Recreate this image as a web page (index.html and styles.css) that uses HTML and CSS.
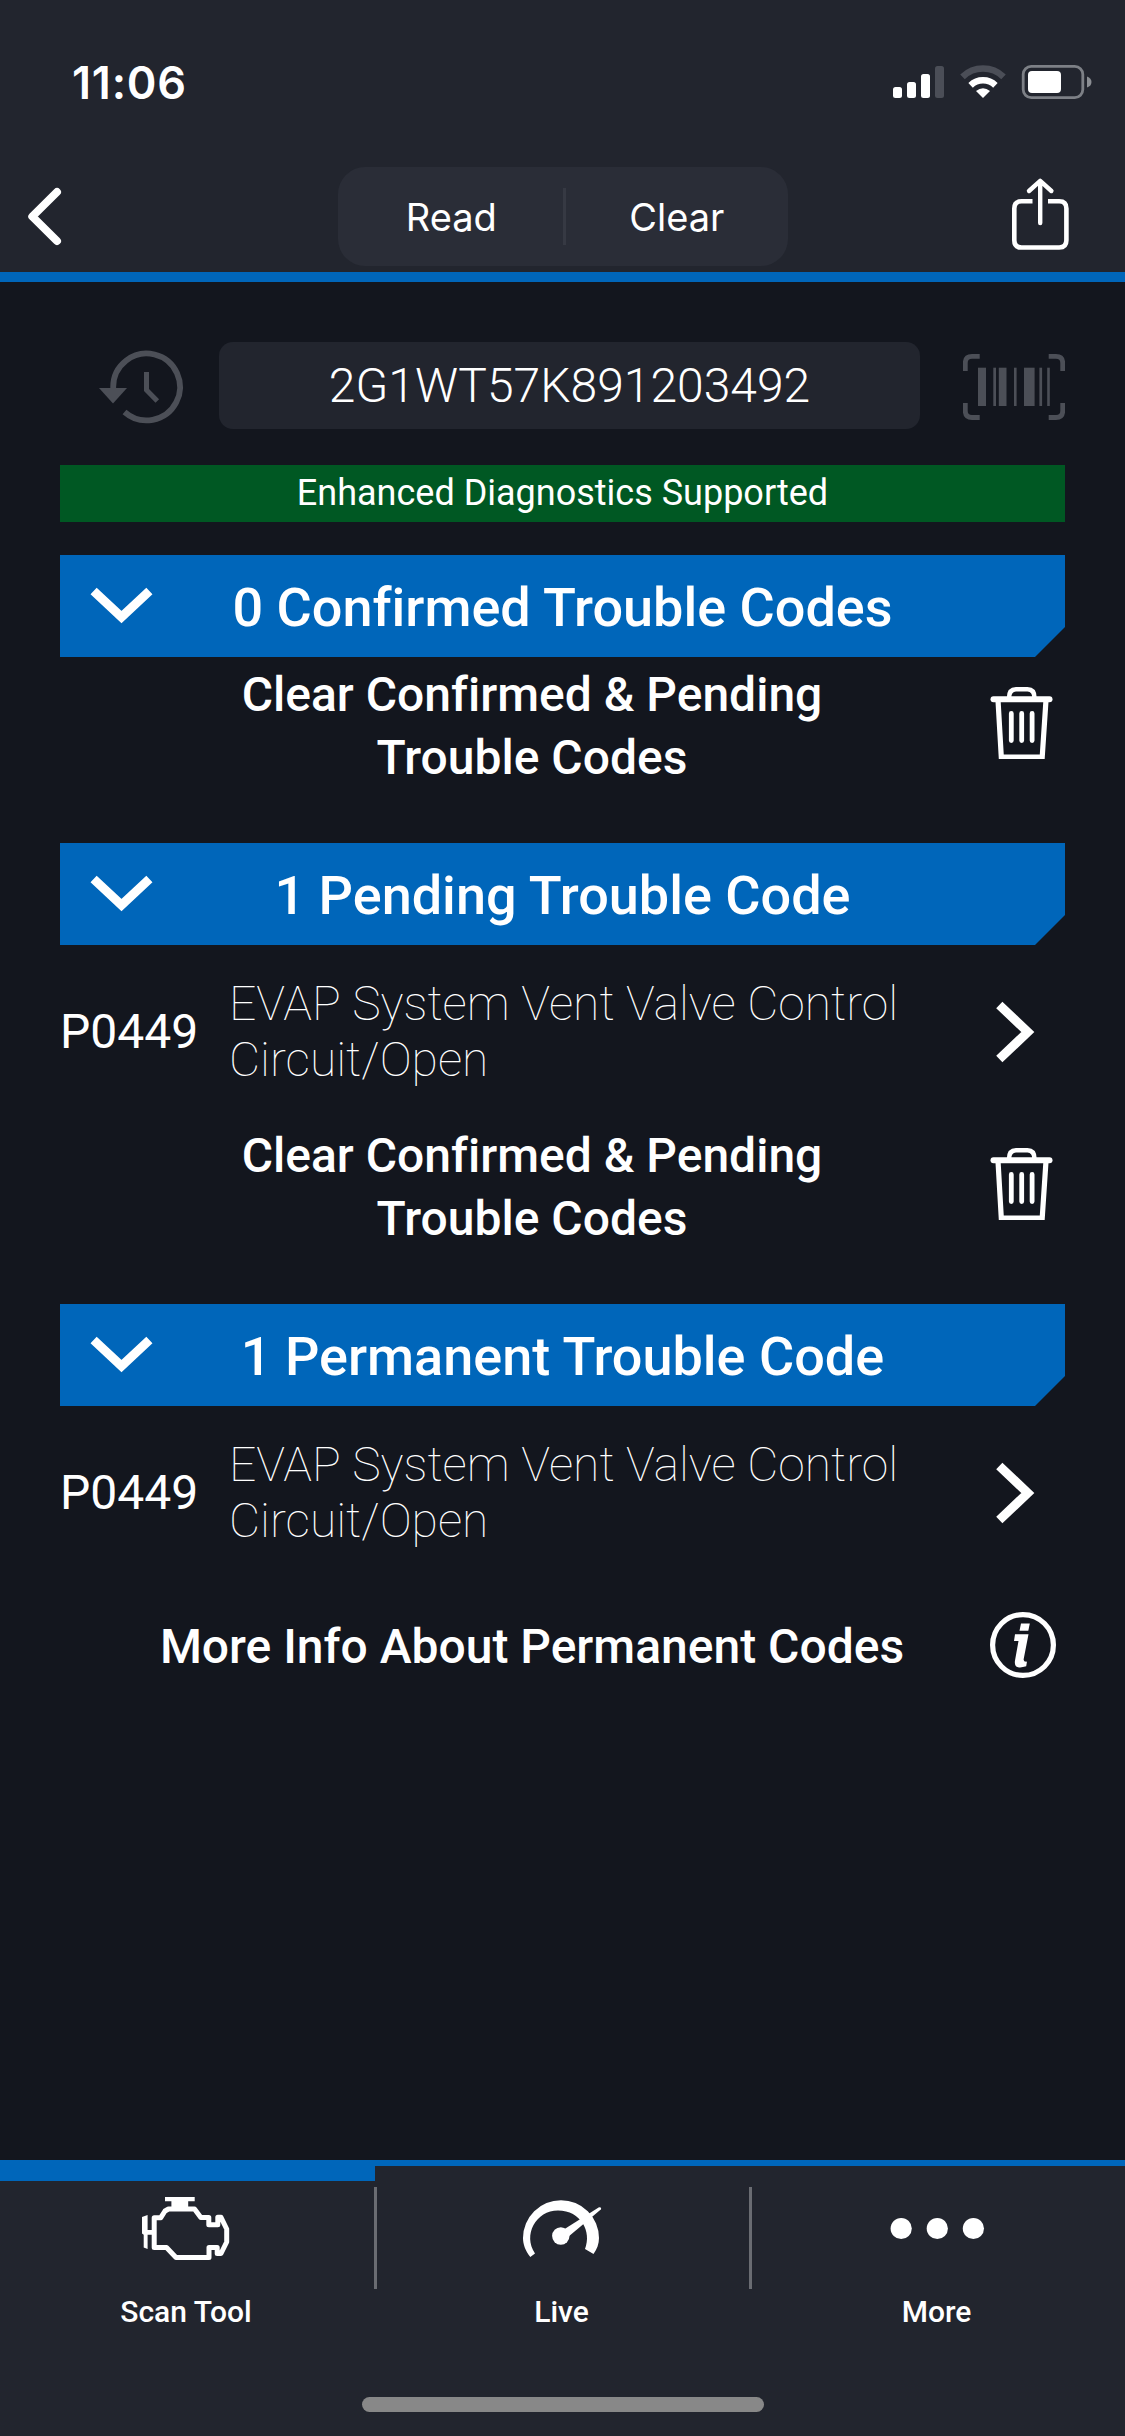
FILE: index.html
```
<!DOCTYPE html>
<html lang="en">
<head>
    <meta charset="UTF-8">
    <title>Trouble Codes</title>
    <link rel="stylesheet" href="styles.css">
</head>
<body>
<!-- shared icons -->
<svg class="defs">
    <symbol id="down" viewBox="0 0 64 38">
        <path d="M3.6 4L31.5 30L59.4 4" fill="none" stroke="#fff" stroke-width="9"/>
    </symbol>
    <symbol id="next" viewBox="0 0 40 62">
        <path d="M3.3 4L31.8 31L3.3 58" fill="none" stroke="#fff" stroke-width="9"/>
    </symbol>
    <symbol id="trash" viewBox="0 0 66 74">
        <g fill="none" stroke="#fff">
            <path d="M19 13C19 6 22 4.2 26 4.2H37.500C41.500 4.200 44.500 6 44.500 13" stroke-width="4.500"/>
            <path d="M3.500 14.300H59.500" stroke-width="6" stroke-linecap="round"/>
            <path d="M8 15L11.300 72.200H52.200L56 15" stroke-width="5.200"/>
            <path d="M21.300 28.500V55.500M31.700 28.500V55.500M42.100 28.500V55.500" stroke-width="4.800" stroke-linecap="round"/>
        </g>
    </symbol>
</svg>

<div class="app">
    <div class="header">
        <div class="status">
            <span class="time">11:06</span>
            <svg class="signal" width="202" height="36" viewBox="891 64 202 36">
                <g fill="#fff">
                    <rect x="893" y="87" width="9" height="11" rx="2.500"/>
                    <rect x="907" y="82" width="9" height="16" rx="2.500"/>
                    <rect x="921" y="74" width="9" height="24" rx="2.500"/>
                    <rect x="935" y="66" width="9" height="32" rx="2.500" fill="#4b4e57"/>
                </g>
                <path d="M962.500 76.800A29.500 29.500 0 0 1 1003.500 76.800" fill="none" stroke="#4b4e57" stroke-width="6.500"/>
                <path d="M970.600 85.300A18 18 0 0 1 995.400 85.300" fill="none" stroke="#fff" stroke-width="6.500"/>
                <path d="M983 98L976 91Q983 85.500 990 91Z" fill="#fff"/>
                <rect x="1023.200" y="66.300" width="59.600" height="31.300" rx="8" fill="none" stroke="#7d8086" stroke-width="2.800"/>
                <rect x="1028" y="71" width="33" height="22" rx="4" fill="#fff"/>
                <path d="M1087 76.500Q1091.500 78 1091.500 82T1087 87.500Z" fill="#8b8e93"/>
            </svg>
        </div>
        <div class="nav">
            <svg class="back" width="40" height="64" viewBox="25 184 40 64">
                <path d="M57 191L32.300 215.500L57 240" fill="none" stroke="#fff" stroke-width="8" stroke-linecap="round" stroke-linejoin="round"/>
            </svg>
            <div class="switch">
                <span class="read">Read</span>
                <span class="line"></span>
                <span class="clear">Clear</span>
            </div>
            <svg class="share" width="60" height="74" viewBox="1010 177 60 74">
                <g fill="none" stroke="#fff" stroke-width="4.600">
                    <path d="M1032.500 201.300H1021.500Q1014.300 201.300 1014.300 208.500V240.300Q1014.300 247.500 1021.500 247.500H1059.200Q1066.400 247.500 1066.400 240.300V208.500Q1066.400 201.300 1059.200 201.300H1048"/>
                    <path d="M1040.200 223V182M1029 191L1040.200 180.800L1051.400 191" stroke-width="4.400" stroke-linecap="round" stroke-linejoin="round"/>
                </g>
            </svg>
        </div>
    </div>

    <div class="content">
        <div class="vin">
            <svg class="history" width="90" height="80" viewBox="97 347 90 80">
                <path d="M113.200 389V387A33.400 33.400 0 1 1 124.500 412" fill="none" stroke="#4c4f57" stroke-width="5.800"/>
                <path d="M99 388H127L113 403.500Z" fill="#4c4f57"/>
                <path d="M146.500 372V390L157.300 401" fill="none" stroke="#4c4f57" stroke-width="5"/>
            </svg>
            <div class="number">2G1WT57K891203492</div>
            <svg class="barcode" width="102" height="66" viewBox="963 354 102 66">
                <path d="M965.300 371V363Q965.300 356.400 972 356.400H979.700M1048.700 356.400H1056Q1062.700 356.400 1062.700 363V371M965.300 403V411Q965.300 417.500 972 417.500H979.700M1048.700 417.500H1056Q1062.700 417.500 1062.700 411V403" fill="none" stroke="#4c4f57" stroke-width="4.800"/>
                <g fill="#4c4f57">
                    <rect x="978" y="367.700" width="8" height="38.300"/>
                    <rect x="993.300" y="367.700" width="2.700" height="38.300"/>
                    <rect x="998.800" y="367.700" width="7.700" height="38.300"/>
                    <rect x="1014" y="367.700" width="2.600" height="38.300"/>
                    <rect x="1024" y="367.700" width="10.600" height="38.300"/>
                    <rect x="1039.400" y="367.700" width="2.700" height="38.300"/>
                    <rect x="1047.200" y="367.700" width="2.600" height="38.300"/>
                </g>
            </svg>
        </div>
        <div class="support">Enhanced Diagnostics Supported</div>

        <div class="bar">
            <svg width="64" height="38"><use href="#down"/></svg>
            <h2>0 Confirmed Trouble Codes</h2>
        </div>
        <div class="action">
            <p>Clear Confirmed &amp; Pending<br>Trouble Codes</p>
            <svg class="trash" width="66" height="74"><use href="#trash"/></svg>
        </div>

        <div class="bar">
            <svg width="64" height="38"><use href="#down"/></svg>
            <h2>1 Pending Trouble Code</h2>
        </div>
        <div class="code">
            <span class="id">P0449</span>
            <p>EVAP System Vent Valve Control Circuit/Open</p>
            <svg width="40" height="62"><use href="#next"/></svg>
        </div>
        <div class="action">
            <p>Clear Confirmed &amp; Pending<br>Trouble Codes</p>
            <svg class="trash" width="66" height="74"><use href="#trash"/></svg>
        </div>

        <div class="bar">
            <svg width="64" height="38"><use href="#down"/></svg>
            <h2>1 Permanent Trouble Code</h2>
        </div>
        <div class="code">
            <span class="id">P0449</span>
            <p>EVAP System Vent Valve Control Circuit/Open</p>
            <svg width="40" height="62"><use href="#next"/></svg>
        </div>
        <div class="action info">
            <p>More Info About Permanent Codes</p>
            <svg width="66" height="66" viewBox="990 1612 66 66">
                <circle cx="1023" cy="1645" r="30.400" fill="none" stroke="#fff" stroke-width="5.200"/>
                <path d="M1021 1623.500H1029.800L1028.300 1630.800H1019.500Z" fill="#fff"/>
                <path d="M1015 1634.300H1028.500L1023.700 1659Q1023.200 1662 1027 1661.600L1026.200 1666.300Q1022 1667.700 1019 1667.400Q1014 1667 1015 1660.500L1018.500 1641H1014Z" fill="#fff"/>
            </svg>
        </div>
    </div>

    <div class="tabs">
        <div class="tab active">
            <svg width="90" height="66" viewBox="142 2196 90 66">
                <path d="M166 2197H195.700V2201.300H189.200V2207H172.400V2201.300H166Z" fill="#fff"/>
                <path d="M169.500 2209H195.500L201.800 2217.500H209.800V2224.800H218.800V2217.300H222L227.700 2229V2242L222 2253.500H218.200V2247.500H210V2257.400H177L167.500 2247.500H155.200V2217.700H161.800L166 2211Z" fill="none" stroke="#fff" stroke-width="5" stroke-linejoin="round"/>
                <path d="M143 2217L148.600 2215V2230H153V2234.700H148.600V2249L144.700 2247.500V2234.700L143 2233.500Z" fill="#fff"/>
            </svg>
            <span>Scan Tool</span>
        </div>
        <div class="tab">
            <svg width="82" height="66" viewBox="521 2196 82 66">
                <path d="M530.300 2257C525 2250 523 2244 523 2238A38 38 0 0 1 561 2200.200A38 38 0 0 1 599 2238C599 2244 597 2249 593.500 2254L585 2249C592 2232 581 2210.600 558 2210.600C536 2210.600 522.500 2235 535 2253.500Z" fill="#fff"/>
                <circle cx="560.800" cy="2236" r="8.700" fill="#fff"/>
                <path d="M563 2230L599 2207.200Q602 2207 600.800 2209.600L568 2237Z" fill="#fff"/>
            </svg>
            <span>Live</span>
        </div>
        <div class="tab">
            <svg width="96" height="66" viewBox="888 2196 96 66">
                <g fill="#fff">
                    <circle cx="900.200" cy="2228.500" r="10.600"/>
                    <circle cx="936.300" cy="2228.500" r="10.600"/>
                    <circle cx="972.400" cy="2228.500" r="10.600"/>
                </g>
            </svg>
            <span>More</span>
        </div>
    </div>
    <div class="home"><div></div></div>
</div>
</body>
</html>
```
FILE: styles.css
```
*{
    margin: 0;
    padding: 0;
    box-sizing: border-box;
}

body{
    background-color: #13161e;
    color: #ffffff;
    font-family: Roboto, "Open Sans", sans-serif;
    font-variant-ligatures: none;
}

svg{
    display: block;
    flex: none;
}

.defs{
    display: none;
}

.app{
    width: 1125px;
    height: 2436px;
    display: flex;
    flex-direction: column;
    overflow: hidden;
}

/* header */
.header{
    height: 282px;
    background-color: #22252e;
    border-bottom: 10px solid #0066ba;
    font-family: Inter, sans-serif;
}

.status{
    height: 167px;
    padding: 64px 32px 0 72px;
    display: flex;
    justify-content: space-between;
    align-items: flex-start;
}

.time{
    font-size: 45px;
    font-weight: 600;
    line-height: 37px;
    letter-spacing: 0.8px;
}

.nav{
    height: 99px;
    padding: 0 55px 0 25px;
    display: grid;
    grid-template-columns: 313px 450px 1fr;
    align-items: center;
}

.share{
    justify-self: end;
    margin-top: -5px;
}

.switch{
    height: 99px;
    border-radius: 27px;
    background-color: #2a2d37;
    display: grid;
    grid-template-columns: 1fr 3px 1fr;
    align-items: center;
    padding-left: 2px;
    text-align: center;
    font-size: 38px;
}

.line{
    height: 57px;
    background-color: #363943;
}

/* content */
.content{
    flex: 1;
    padding: 60px 60px 0;
}

.vin{
    height: 87px;
    padding-left: 37px;
    display: flex;
    align-items: center;
}

.vin svg{
    margin-top: 3px;
}

.number{
    width: 701px;
    height: 87px;
    margin: 0 43px 0 32px;
    border-radius: 14px;
    background-color: #22252e;
    font-size: 48px;
    font-weight: 300;
    line-height: 87px;
    text-align: center;
}

.support{
    height: 57px;
    margin-top: 36px;
    background-color: #005823;
    font-size: 36px;
    line-height: 57px;
    text-align: center;
}

.bar{
    height: 102px;
    padding: 0 30px;
    background-color: #0066ba;
    clip-path: polygon(0 0, 100% 0, 100% 72px, 975px 100%, 0 100%);
    display: grid;
    grid-template-columns: 64px 1fr 64px;
    align-items: center;
}

.bar svg{
    margin-top: -4px;
}

.support + .bar{
    margin-top: 33px;
}

.bar h2{
    font-size: 54px;
    font-weight: 500;
    line-height: 106px;
    text-align: center;
    white-space: nowrap;
}

.action{
    height: 132px;
    margin-bottom: 54px;
    padding: 0 9px 0 14px;
    display: flex;
    align-items: center;
}

.action p{
    flex: 1;
    padding-top: 6px;
    font-size: 48px;
    font-weight: 500;
    line-height: 63px;
    text-align: center;
}

.trash{
    margin-top: -2px;
}

.info p{
    padding-top: 2px;
}

.code{
    height: 173px;
    padding-right: 29px;
    display: flex;
    align-items: center;
    font-size: 48px;
    line-height: 56px;
}

.id{
    width: 169px;
}

.code p{
    width: 700px;
    margin-right: auto;
    font-weight: 100;
}

/* bottom tabs */
.tabs{
    height: 177px;
    border-top: 6px solid #0066ba;
    background-color: #22252e;
    display: grid;
    grid-template-columns: repeat(3, 1fr);
}

.tab{
    position: relative;
    padding: 30px 2px 0 0;
    display: flex;
    flex-direction: column;
    align-items: center;
    font-size: 30px;
    font-weight: 500;
    line-height: 36px;
}

.tab span{
    margin-top: 32px;
}

.tab + .tab:before{
    content: "";
    position: absolute;
    left: -1px;
    top: 21px;
    width: 3px;
    height: 102px;
    background-color: #6a6c72;
}

.active{
    padding-right: 3px;
    box-shadow: inset 0 15px #0066ba;
}

.home{
    height: 99px;
    padding-top: 60px;
    background-color: #22252e;
}

.home div{
    width: 402px;
    height: 15px;
    margin: 0 auto;
    border-radius: 8px;
    background-color: #888888;
}
```
